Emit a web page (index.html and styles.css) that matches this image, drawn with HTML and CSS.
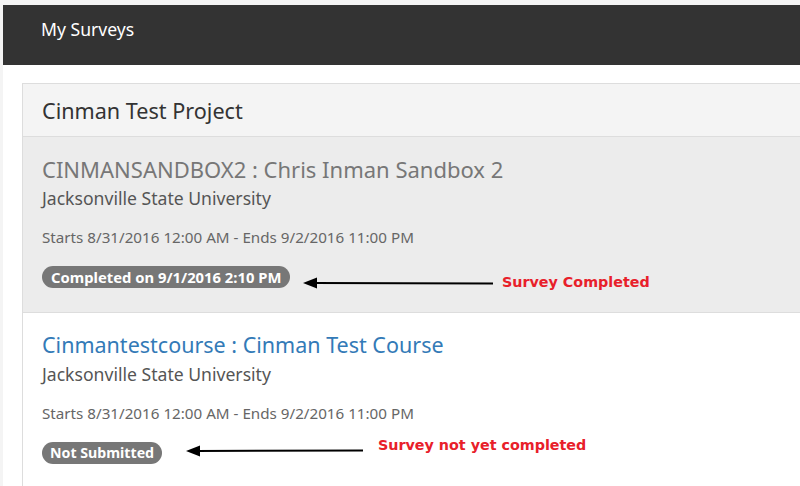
FILE: index.html
```html
<!DOCTYPE html>
<html>
<head>
<meta charset="utf-8">
<link rel="stylesheet" href="styles.css">
</head>
<body>
<div class="frame">
  <header class="topbar">
    <span class="topbar-title">My Surveys</span>
  </header>
  <main class="content">
    <section class="panel">
      <div class="panel-heading">Cinman Test Project</div>
      <div class="survey survey-done">
        <div class="survey-title">CINMANSANDBOX2 : Chris Inman Sandbox 2</div>
        <div class="survey-org">Jacksonville State University</div>
        <div class="survey-dates">Starts 8/31/2016 12:00 AM - Ends 9/2/2016 11:00 PM</div>
        <div class="badge-row">
          <span class="badge">Completed on 9/1/2016 2:10 PM</span>
        </div>
        <div class="note note-1">
          <svg class="arrow" width="190" height="12" viewBox="0 0 190 12"><line x1="10" y1="6" x2="190" y2="6.5" stroke="#000" stroke-width="2"/><polygon points="0,6 14,0.5 14,11.5" fill="#000"/></svg>
          <span class="note-text">Survey Completed</span>
        </div>
      </div>
      <div class="survey">
        <a class="survey-title survey-link">Cinmantestcourse : Cinman Test Course</a>
        <div class="survey-org">Jacksonville State University</div>
        <div class="survey-dates">Starts 8/31/2016 12:00 AM - Ends 9/2/2016 11:00 PM</div>
        <div class="badge-row">
          <span class="badge badge-small">Not Submitted</span>
        </div>
        <div class="note note-2">
          <svg class="arrow" width="177" height="12" viewBox="0 0 177 12"><line x1="10" y1="6" x2="177" y2="5.5" stroke="#000" stroke-width="2"/><polygon points="0,6 14,0.5 14,11.5" fill="#000"/></svg>
          <span class="note-text">Survey not yet completed</span>
        </div>
      </div>
    </section>
  </main>
</div>
</body>
</html>
```
FILE: styles.css
```css
html, body {
  margin: 0;
  padding: 0;
  background: #f4f4f4;
  overflow: hidden;
  height: 486px;
}
body {
  font-family: "Noto Sans", "Open Sans", sans-serif;
}
.frame {
  margin: 5px 0 0 3px;
  background: #fff;
  height: 481px;
  overflow: hidden;
}
.topbar {
  height: 60px;
  box-sizing: border-box;
  background: #333;
  display: flex;
  align-items: flex-start;
  padding: 12px 0 0 38px;
}
.topbar-title {
  color: #fff;
  font-size: 17.6px;
  line-height: 24px;
}
.content {
  padding: 18px 0 0 19px;
}
.panel {
  border: 1px solid #ddd;
  border-right: none;
  width: 800px;
}
.panel-heading {
  height: 52px;
  background: #f4f4f4;
  border-bottom: 1px solid #ddd;
  padding-left: 19px;
  display: flex;
  align-items: center;
  font-size: 21.6px;
  color: #333;
}
.survey {
  position: relative;
  padding: 17px 19px 22px;
  border-bottom: 1px solid #ddd;
}
.survey-done {
  background: #ececec;
  height: 176px;
  box-sizing: border-box;
}
.survey-title {
  display: block;
  font-size: 22px;
  line-height: 30px;
  color: #777;
}
.survey-link {
  color: #337ab7;
  font-size: 21.5px;
}
.survey-org {
  font-size: 17.6px;
  line-height: 29px;
  color: #555;
}
.survey-dates {
  margin-top: 14px;
  font-size: 15.2px;
  line-height: 21px;
  color: #666;
}
.badge-row {
  margin-top: 18px;
  display: flex;
}
.badge {
  background: #777;
  color: #fff;
  font-weight: bold;
  font-size: 14.8px;
  line-height: 22px;
  padding: 0 9px;
  border-radius: 11px;
}
.badge-small {
  font-size: 14.2px;
  padding: 0 8px;
}
.note {
  position: absolute;
  display: flex;
  align-items: center;
}
.note-1 {
  left: 280px;
  top: 139px;
}
.note-2 {
  left: 163px;
  top: 132px;
}
.note-text {
  font-family: "DejaVu Sans", sans-serif;
  font-weight: bold;
  color: #e8202a;
  font-size: 14.3px;
  margin-left: 9px;
  margin-top: -2px;
}
.note-2 .note-text {
  margin-left: 15px;
  margin-top: -12px;
}
```
